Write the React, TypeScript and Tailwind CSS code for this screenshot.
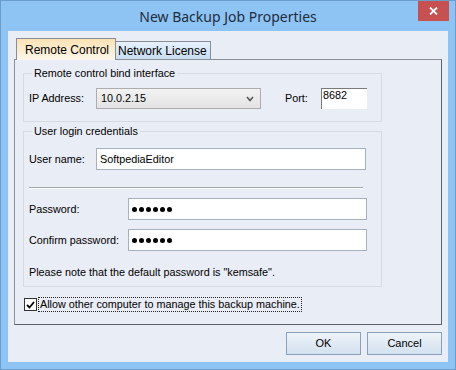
import React from "react";

const sans = "font-['Liberation_Sans',Arial,sans-serif]";

const TextBox = ({ value, className }: { value: string; className: string }) => (
  <div className={`h-[22px] bg-white border border-[#a7b0bd] flex items-center pl-[3px] text-black ${className}`}>
    {value}
  </div>
);

const Dots = () => (
  <span className="flex items-center gap-[2px]">
    {[0, 1, 2, 3, 4, 5].map((i) => (
      <span key={i} className="w-[5px] h-[5px] rounded-full bg-black" />
    ))}
  </span>
);

const App: React.FC = () => {
  return (
    <div className={`w-[456px] h-[370px] bg-[#8dc4f4] border border-[#6a9ccc] flex flex-col ${sans}`}>
      {/* title bar */}
      <div className="relative h-[30px] flex items-center justify-center">
        <span className="font-['Noto_Sans',sans-serif] text-[14px] text-[#1f2c3c] pt-[1px]">New Backup Job Properties</span>
        <div className="absolute top-0 right-[6px] w-[31px] h-[20px] bg-[#c75050] flex items-center justify-center">
          <svg width="9" height="8" viewBox="0 0 9 8">
            <path d="M1 0.5 L8 7.5 M8 0.5 L1 7.5" stroke="#fff" strokeWidth="1.8" />
          </svg>
        </div>
      </div>

      {/* client area */}
      <div className="mx-[7px] h-[331px] bg-[#e9edf5] flex flex-col pt-[7px] px-[6px]">
        {/* tabs */}
        <div className="flex items-end h-[21px] pl-[2px]">
          <div className="relative z-10 w-[100px] h-[22px] -mb-px border border-b-0 border-[#898c95] bg-gradient-to-b from-[#fbe2b4] to-[#fdf6ea] flex items-center pl-[8px] text-[12px] text-black">
            Remote Control
          </div>
          <div className="w-[95px] h-[18px] border border-l-0 border-b-0 border-[#898c95] bg-gradient-to-b from-[#e6f1fb] to-[#c9def2] flex items-center pl-[2px] text-[12px] text-black">
            Network License
          </div>
        </div>

        {/* panel */}
        <div className="w-[428px] h-[266px] border border-[#8a8f98] border-r-[#5f6166] border-b-[#5f6166] bg-[#e9edf5] pl-[8px] text-[10.8px] text-black">
          <fieldset className="mt-[7px] w-[359px] border border-[#d6dbe0]">
            <legend className="ml-[8px] px-[2px] leading-[13px]">Remote control bind interface</legend>
            <div className="flex items-center h-[21px] mt-[8px] mb-[12px] pl-[5px]">
              <span className="w-[67px]">IP Address:</span>
              <div className="w-[165px] h-[21px] border border-[#acacac] bg-gradient-to-b from-[#f2f2f2] to-[#e3e3e3] flex items-center justify-between pl-[4px] pr-[6px]">
                <span>10.0.2.15</span>
                <svg width="8" height="6" viewBox="0 0 8 6">
                  <path d="M1 1 L4 4.5 L7 1" stroke="#555" strokeWidth="1.6" fill="none" />
                </svg>
              </div>
              <span className="ml-[24px] w-[36px]">Port:</span>
              <div className="w-[46px] h-[21px] bg-white border-t border-l border-[#7a7a7a] flex items-start pl-[1px] leading-[13px]">
                8682
              </div>
            </div>
          </fieldset>

          <fieldset className="mt-[3px] w-[359px] border border-[#d6dbe0]">
            <legend className="ml-[8px] px-[2px] leading-[13px]">User login credentials</legend>
            <div className="flex flex-col pl-[5px] pt-[10px] pb-[7px]">
              <div className="flex items-center">
                <span className="w-[67px]">User name:</span>
                <TextBox value="SoftpediaEditor" className="w-[270px]" />
              </div>
              <div className="mt-[17px] w-[334px] h-[2px] border-t border-[#a6a6a6] border-b border-b-white" />
              <div className="flex items-center mt-[9px]">
                <span className="w-[99px]">Password:</span>
                <div className="w-[239px] h-[22px] bg-white border border-[#a7b0bd] flex items-center pl-[3px]">
                  <Dots />
                </div>
              </div>
              <div className="flex items-center mt-[9px]">
                <span className="w-[99px]">Confirm password:</span>
                <div className="w-[239px] h-[22px] bg-white border border-[#a7b0bd] flex items-center pl-[3px]">
                  <Dots />
                </div>
              </div>
              <p className="mt-[15px] leading-[13px]">Please note that the default password is "kemsafe".</p>
            </div>
          </fieldset>

          <div className="flex items-center mt-[10px] pl-[1px] h-[15px]">
            <div className="w-[13px] h-[13px] bg-white border border-[#333] flex items-center justify-center">
              <svg width="9" height="8" viewBox="0 0 9 8">
                <path d="M1 4 L3.5 6.5 L8 1" stroke="#000" strokeWidth="1.8" fill="none" />
              </svg>
            </div>
            <span className="ml-[1px] px-[1px] border border-dotted border-[#222] leading-[13px]">
              Allow other computer to manage this backup machine.
            </span>
          </div>
        </div>

        {/* buttons */}
        <div className="flex justify-end gap-[6px] mt-[7px] text-[11px] text-black">
          <button className="w-[75px] h-[23px] border border-[#8aa0b8] bg-gradient-to-b from-[#eef3f9] to-[#d3e1ef]">OK</button>
          <button className="w-[75px] h-[23px] border border-[#8aa0b8] bg-gradient-to-b from-[#eef3f9] to-[#d3e1ef]">Cancel</button>
        </div>
      </div>
    </div>
  );
};

export default App;
